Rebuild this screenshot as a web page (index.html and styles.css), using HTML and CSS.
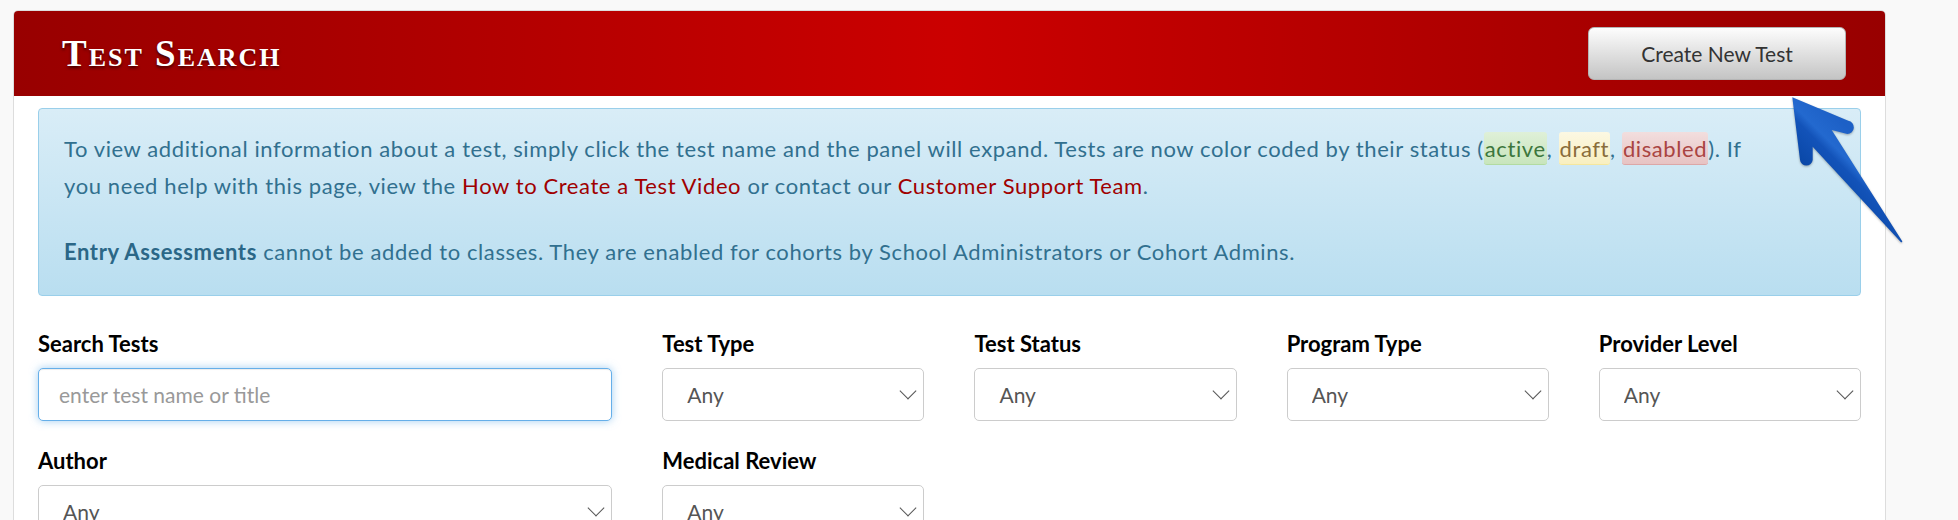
FILE: index.html
```html
<!DOCTYPE html>
<html lang="en">
<head>
    <meta charset="UTF-8">
    <meta name="viewport" content="width=device-width, initial-scale=1.0">
    <title>Test Search</title>
    <link rel="stylesheet" href="styles.css">
</head>
<body>
    <div class="panel">
        <div class="panel-heading">
            <h1 class="title">Test Search</h1>
            <button class="btn-create">Create New Test</button>
        </div>
        <div class="panel-body">
            <div class="alert">
                <p>To view additional information about a test, simply click the test name and the panel will expand. Tests are now color coded by their status (<span class="st st-active">active</span>, <span class="st st-draft">draft</span>, <span class="st st-disabled">disabled</span>). If you need help with this page, view the <a href="#">How to Create a Test Video</a> or contact our <a href="#">Customer Support Team</a>.</p>
                <p><strong>Entry Assessments</strong> cannot be added to classes. They are enabled for cohorts by School Administrators or Cohort Admins.</p>
            </div>

            <div class="filters">
                <div class="field wide">
                    <label>Search Tests</label>
                    <input class="control focused" type="text" placeholder="enter test name or title">
                </div>
                <div class="field">
                    <label>Test Type</label>
                    <div class="select"><select class="control"><option>Any</option></select></div>
                </div>
                <div class="field">
                    <label>Test Status</label>
                    <div class="select"><select class="control"><option>Any</option></select></div>
                </div>
                <div class="field">
                    <label>Program Type</label>
                    <div class="select"><select class="control"><option>Any</option></select></div>
                </div>
                <div class="field">
                    <label>Provider Level</label>
                    <div class="select"><select class="control"><option>Any</option></select></div>
                </div>
                <div class="field wide">
                    <label>Author</label>
                    <div class="select"><select class="control"><option>Any</option></select></div>
                </div>
                <div class="field">
                    <label>Medical Review</label>
                    <div class="select"><select class="control"><option>Any</option></select></div>
                </div>
            </div>
        </div>
    </div>

    <!-- annotation arrow pointing at the button -->
    <svg class="pointer" width="140" height="170" viewBox="0 0 140 170">
        <defs>
            <linearGradient id="arrowFill" gradientUnits="userSpaceOnUse" x1="30" y1="80" x2="70" y2="40">
                <stop offset="0" stop-color="#0a48a8"/>
                <stop offset="0.45" stop-color="#1353b9"/>
                <stop offset="0.6" stop-color="#2369cf"/>
                <stop offset="1" stop-color="#1d60c6"/>
            </linearGradient>
        </defs>
        <path d="M17.3 12.3 L73.3 35.7 A6.7 6.7 0 0 1 72.3 49 L56.7 45 L127.4 156.4 L126.2 157.6 L37.7 61.7 L37.7 75 A6.4 6.4 0 0 1 25 75 Z" fill="url(#arrowFill)"/>
    </svg>
</body>
</html>
```

FILE: styles.css
```css
* {
    box-sizing: border-box;
}
body {
    margin: 0;
    background: #f9f9f9;
    font-family: Lato, "Noto Sans", sans-serif;
}
.panel {
    margin: 10px 0 0 13px;
    width: 1873px;
    min-height: 600px;
    background: #fff;
    border: 1px solid #ddd;
    border-radius: 5px 5px 0 0;
}
.panel-heading {
    height: 85px;
    display: flex;
    align-items: center;
    justify-content: space-between;
    padding: 0 39px 0 48px;
    background: linear-gradient(to right, #980000 0%, #cb0000 50%, #980000 100%);
    border-radius: 4px 4px 0 0;
}
.title {
    margin: 0;
    font-family: "Liberation Serif", serif;
    font-size: 37px;
    font-weight: bold;
    font-variant: small-caps;
    letter-spacing: 2px;
    line-height: 37px;
    color: #fff;
    text-shadow: 0 2px 3px rgba(40, 0, 0, 0.8);
}
.btn-create {
    width: 258px;
    height: 53px;
    border: 1px solid #b5b5b5;
    border-radius: 6px;
    background: linear-gradient(#fdfdfd, #c4c4c4);
    font-family: Lato, sans-serif;
    font-size: 21px;
    color: #333;
    cursor: pointer;
}
.panel-body {
    padding: 12px 24px;
}
.alert {
    border: 1px solid #9acfea;
    border-radius: 4px;
    background: linear-gradient(#d9edf7, #b9def0);
    color: #31708f;
    padding: 22px 94px 24px 25px;
    font-size: 22px;
    letter-spacing: 0.6px;
    line-height: 36.67px;
}
.alert p {
    margin: 0;
}
.alert p + p {
    margin-top: 30px;
}
.alert a {
    color: #a00000;
    text-decoration: none;
}
.alert strong {
    color: #2b6787;
}
.st {
    padding: 3px 1px 2px;
    border-radius: 3px;
}
.st-active {
    color: #3c763d;
    background: linear-gradient(#dff0d8, #c8e5bc);
    border-bottom: 1px solid #b2dba1;
}
.st-draft {
    color: #8a6d3b;
    background: linear-gradient(#fcf8e3, #f8efc0);
    border-bottom: 1px solid #f5e79e;
}
.st-disabled {
    color: #a94442;
    background: linear-gradient(#f2dede, #e7c3c3);
    border-bottom: 1px solid #dca7a7;
}
.filters {
    margin-top: 35px;
    display: grid;
    grid-template-columns: repeat(6, 1fr);
    column-gap: 50px;
    row-gap: 27px;
}
.field.wide {
    grid-column: span 2;
}
.field label {
    display: block;
    font-size: 22px;
    font-weight: bold;
    line-height: 25px;
    margin-bottom: 12px;
    color: #000;
}
.control {
    display: block;
    width: 100%;
    height: 53px;
    border: 1px solid #ccc;
    border-radius: 5px;
    background: #fff;
    padding: 0 20px;
    font-family: Lato, sans-serif;
    font-size: 21px;
    color: #555;
    appearance: none;
    -webkit-appearance: none;
}
.control::placeholder {
    color: #999;
}
.control.focused {
    border-color: #66afe9;
    outline: none;
    box-shadow: inset 0 1px 1px rgba(0, 0, 0, 0.075), 0 0 8px rgba(102, 175, 233, 0.6);
}
.select {
    position: relative;
}
.select .control {
    padding-left: 24px;
}
.select::after {
    content: '';
    position: absolute;
    right: 10px;
    top: 17px;
    width: 11px;
    height: 11px;
    border-right: 1.5px solid #555;
    border-bottom: 1.5px solid #555;
    transform: rotate(45deg);
}
.pointer {
    position: absolute;
    left: 1775px;
    top: 85px;
    filter: drop-shadow(0 1px 1px rgba(0, 0, 0, 0.3));
}
```
